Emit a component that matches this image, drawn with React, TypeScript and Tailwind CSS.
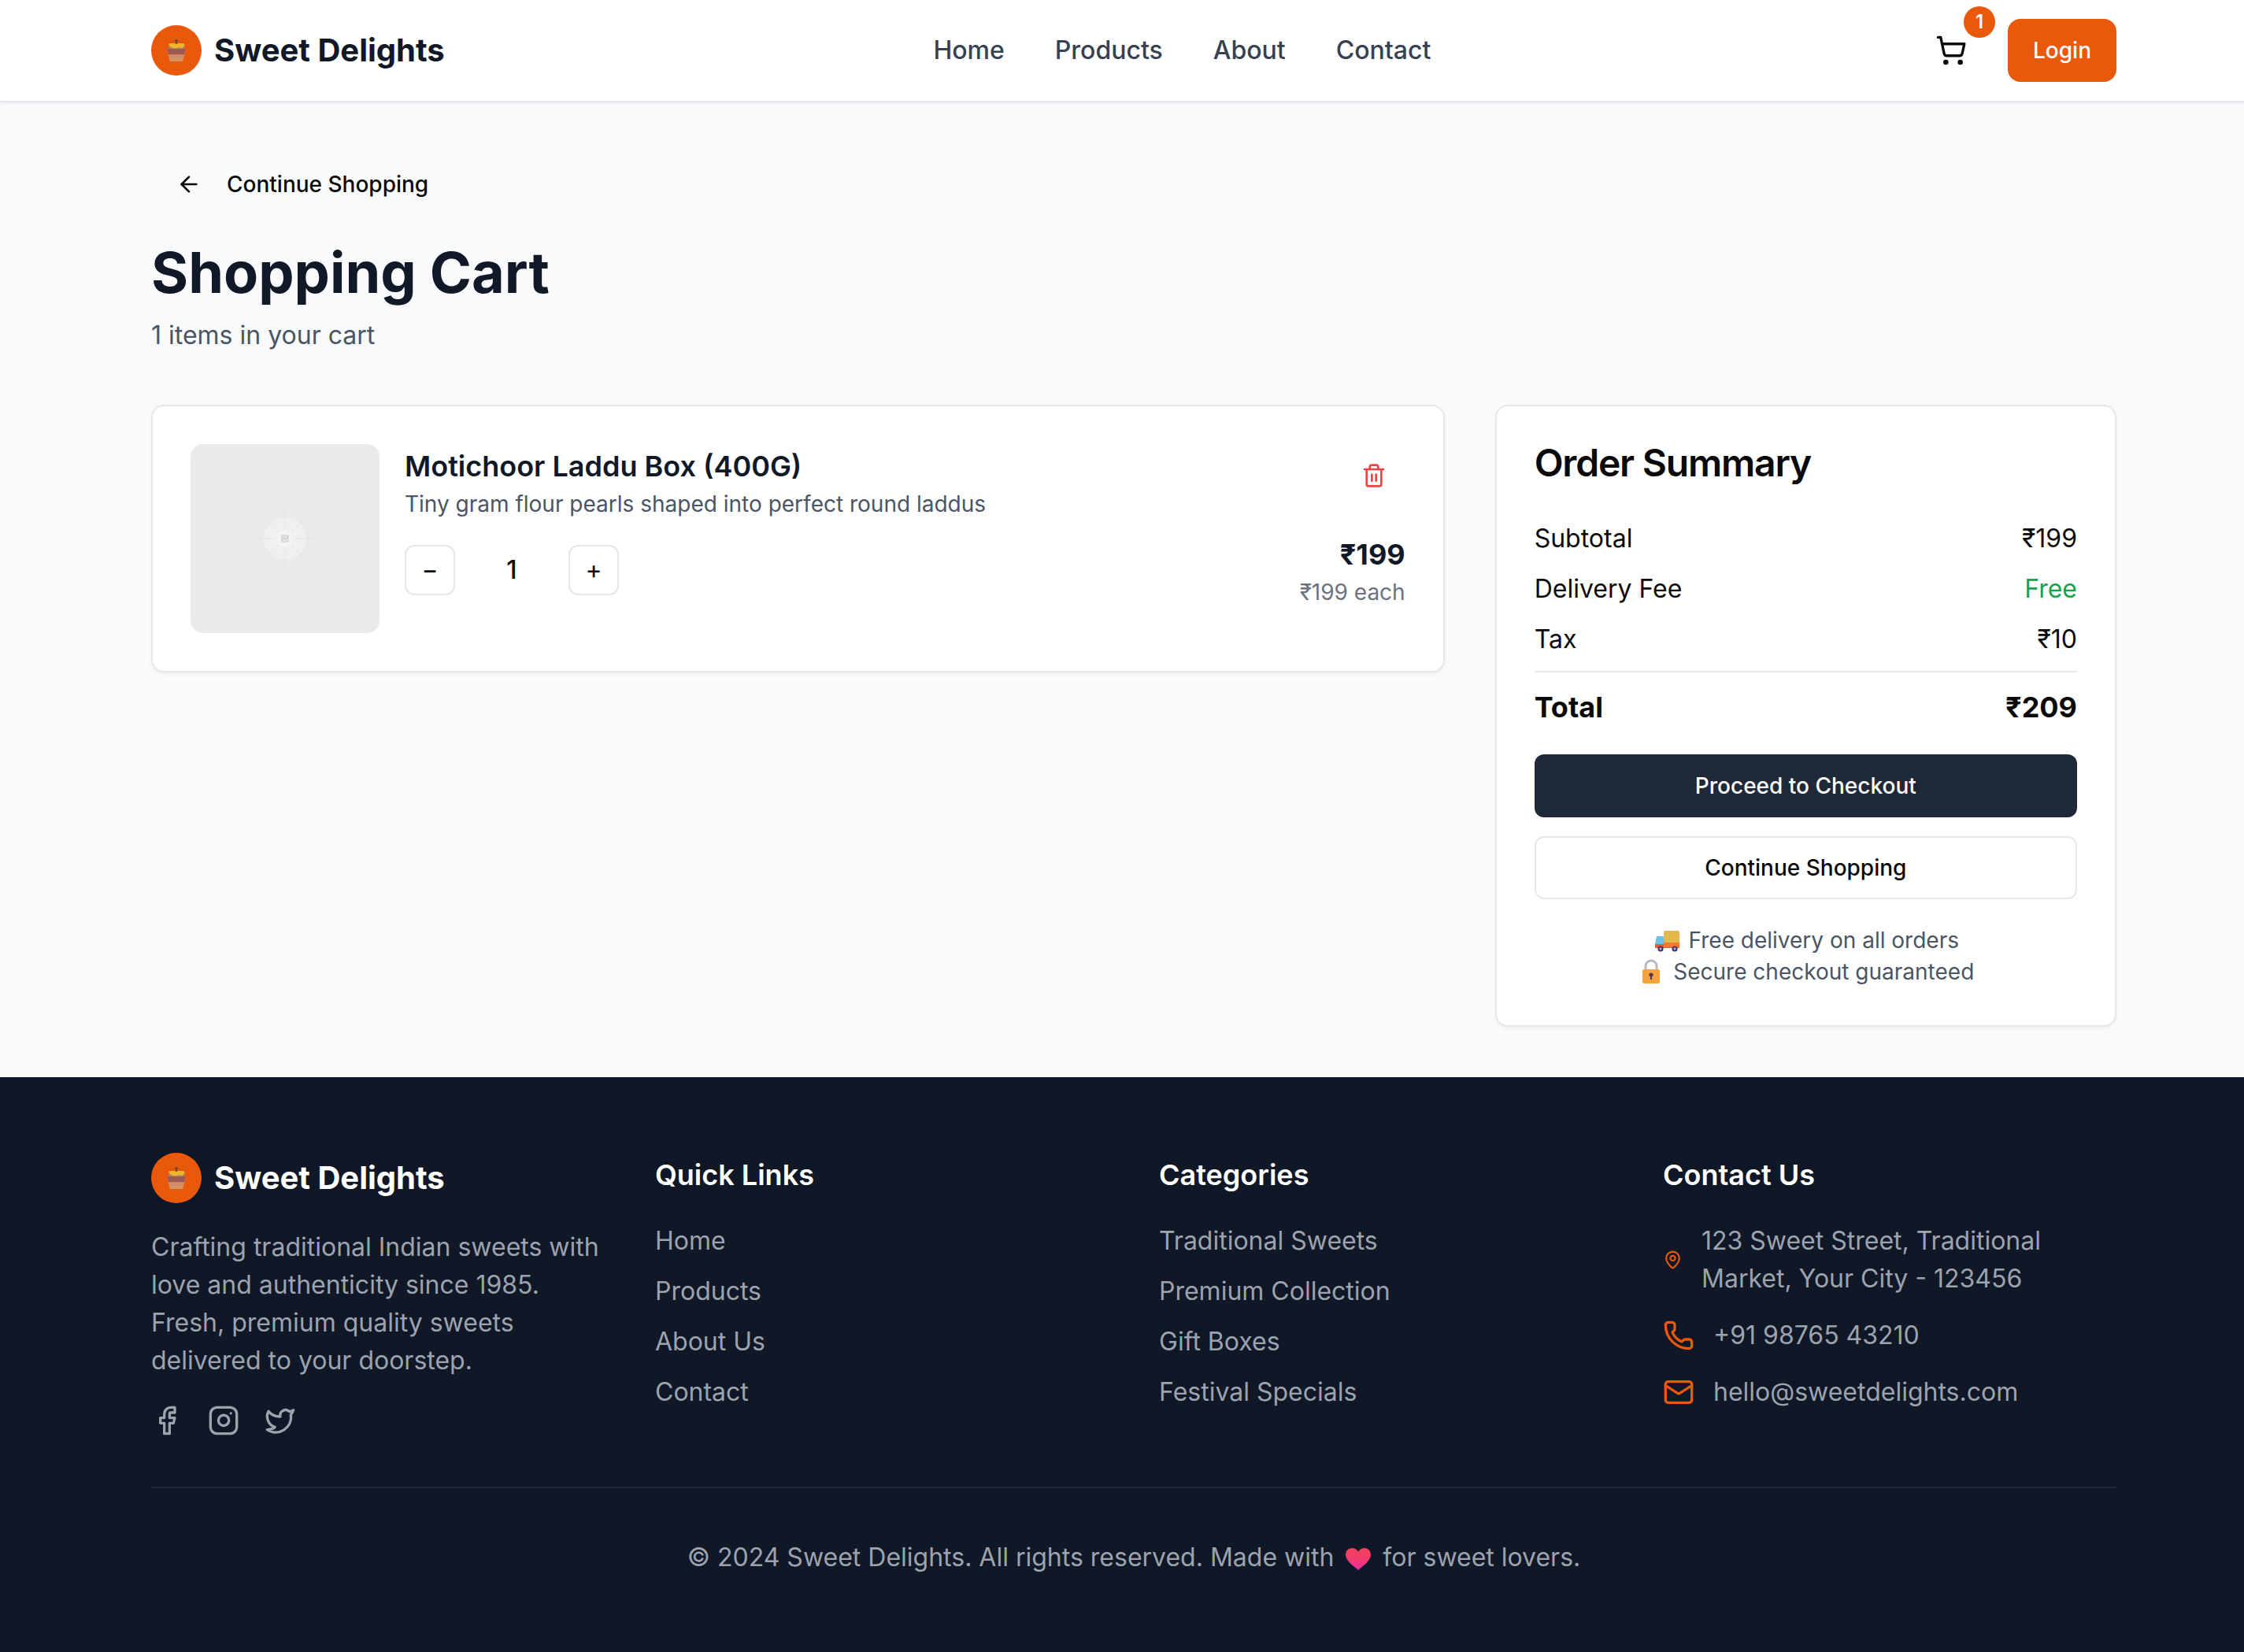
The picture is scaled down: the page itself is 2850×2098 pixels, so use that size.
import React from 'react';
import { ArrowLeft, Facebook, Instagram, Mail, MapPin, Phone, ShoppingCart, Trash2, Twitter } from 'lucide-react';

function HoneyPot() {
    return (
        <svg viewBox="0 0 26 30" className="w-[26px] h-[30px]">
            <defs>
                <linearGradient id="pot" x1="0" y1="0" x2="0" y2="1">
                    <stop offset="0" stopColor="#b5735a" />
                    <stop offset="1" stopColor="#dc9668" />
                </linearGradient>
            </defs>
            <path d="M4 9 L22 9 C25 12 25 16 23 22 L21 29 L5 29 L3 22 C1 16 1 12 4 9 Z" fill="url(#pot)" />
            <path d="M1.5 13 L24.5 13 C24.4 16 23.8 18 23 20 L3 20 C2.2 18 1.6 16 1.5 13 Z" fill="#9a5a52" />
            <path d="M4 6 L22 6 C24 7 24 10 21 11 C20 13 19 13 18 11 L13 12 C11 13 7 12 5 10 C3 9 3 7 4 6 Z" fill="#eab72d" />
            <rect x="12" y="1" width="2" height="6" fill="#7a4a2b" />
            <rect x="10.5" y="2" width="5" height="2" fill="#7a4a2b" />
        </svg>
    );
}

function Logo({ dark }: { dark?: boolean }) {
    return (
        <div className="flex items-center gap-4">
            <div className="w-16 h-16 rounded-full bg-[#ea580c] flex items-center justify-center">
                <HoneyPot />
            </div>
            <span className={`text-[40px] leading-[56px] font-bold ${dark ? 'text-white' : 'text-[#111827]'}`}>Sweet Delights</span>
        </div>
    );
}

function PlaceholderMark() {
    return (
        <svg viewBox="0 0 120 120" className="w-[120px] h-[120px]">
            <g stroke="#e3e3e3" strokeWidth="1">
                <line x1="60" y1="22" x2="60" y2="98" />
                <line x1="22" y1="60" x2="98" y2="60" />
                <line x1="23" y1="23" x2="97" y2="97" />
                <line x1="97" y1="23" x2="23" y2="97" />
            </g>
            <circle cx="60" cy="60" r="27" fill="#f0f0f0" />
            <g stroke="#e6e6e6" strokeWidth="1">
                <line x1="60" y1="33" x2="60" y2="87" />
                <line x1="33" y1="60" x2="87" y2="60" />
                <line x1="41" y1="41" x2="79" y2="79" />
                <line x1="79" y1="41" x2="41" y2="79" />
            </g>
            <circle cx="60" cy="60" r="11" fill="#f3f3f3" />
            <rect x="56" y="56" width="8" height="8" fill="#e6e6e6" stroke="#c8c8c8" strokeWidth="1" />
            <path d="M56 62 L59 59 L61 61 L64 57" stroke="#c0c0c0" strokeWidth="1" fill="none" />
        </svg>
    );
}

function TruckEmoji() {
    return (
        <svg viewBox="0 0 36 30" className="inline-block w-[36px] h-[30px] mr-[2px] align-[-6px]">
            <rect x="14" y="2" width="20" height="17" rx="2" fill="#e3b94d" />
            <path d="M5 9 L14 9 L14 19 L3 19 Z" fill="#67c6e8" />
            <path d="M3 19 L34 19 L34 24 L3 24 Z" fill="#f0582f" />
            <rect x="14" y="17" width="20" height="6" fill="#f47a34" />
            <circle cx="10" cy="25" r="3.6" fill="#4a3468" />
            <circle cx="10" cy="25" r="1.4" fill="#c9bcd9" />
            <circle cx="28" cy="25" r="3.6" fill="#4a3468" />
            <circle cx="28" cy="25" r="1.4" fill="#c9bcd9" />
        </svg>
    );
}

function LockEmoji() {
    return (
        <svg viewBox="0 0 36 32" className="inline-block w-[36px] h-[32px] mr-[2px] align-[-6px]">
            <path d="M11 14 V9 a7 7 0 0 1 14 0 V14" fill="none" stroke="#b8b8c4" strokeWidth="3" />
            <rect x="7" y="13" width="22" height="18" rx="2.5" fill="#f8a23c" />
            <circle cx="18" cy="20" r="2.6" fill="#4a3a5c" />
            <rect x="17" y="21" width="2" height="5" fill="#4a3a5c" />
        </svg>
    );
}

function HeartEmoji() {
    return (
        <svg viewBox="0 0 32 28" className="inline-block w-[32px] h-[28px] mx-[6px] align-[-5px]">
            <defs>
                <linearGradient id="heart" x1="0" y1="0" x2="0" y2="1">
                    <stop offset="0" stopColor="#f5405a" />
                    <stop offset="0.55" stopColor="#f23a6e" />
                    <stop offset="1" stopColor="#e82bb0" />
                </linearGradient>
            </defs>
            <path d="M16 28 C12 24 0 17 0 8.5 C0 3.5 3.6 0 8 0 C11.5 0 14.5 1.8 16 4.6 C17.5 1.8 20.5 0 24 0 C28.4 0 32 3.5 32 8.5 C32 17 20 24 16 28 Z" fill="url(#heart)" />
        </svg>
    );
}

export default function App() {
    return (
        <div className="overflow-hidden">
            <div className="w-[2880px] min-h-screen bg-[#f9fafb] font-[Inter,sans-serif] text-[#0a0a0a]">
                <nav className="bg-white border-b-2 border-[#e5e7eb] shadow-[0_2px_4px_rgba(0,0,0,0.05)]">
                    <div className="max-w-[2560px] mx-auto px-8 h-32 flex items-center justify-between">
                        <Logo />
                        <div className="flex items-center gap-16 text-[32px] leading-[48px] font-medium text-[#374151]">
                            <span>Home</span>
                            <span>Products</span>
                            <span>About</span>
                            <span>Contact</span>
                        </div>
                        <div className="flex items-center gap-8">
                            <button className="relative w-20 h-20 flex items-center justify-center">
                                <ShoppingCart className="w-10 h-10" strokeWidth={2} />
                                <span className="absolute -top-4 -right-4 w-10 h-10 rounded-full bg-[#ea580c] text-white text-2xl font-semibold flex items-center justify-center">1</span>
                            </button>
                            <button className="h-20 px-8 rounded-2xl bg-[#ea580c] text-white text-[28px] font-medium">Login</button>
                        </div>
                    </div>
                </nav>

                <main className="max-w-[2560px] mx-auto px-8 py-16">
                    <button className="h-20 px-8 flex items-center gap-8 text-[28px] font-medium">
                        <ArrowLeft className="w-8 h-8" strokeWidth={2} />
                        Continue Shopping
                    </button>
                    <h1 className="mt-8 text-[72px] leading-[80px] font-bold text-[#111827]">Shopping Cart</h1>
                    <p className="mt-4 mb-16 text-[32px] leading-[48px] text-[#4b5563]">1 items in your cart</p>

                    <div className="grid grid-cols-3 gap-16 items-start">
                        <div className="col-span-2 bg-white border-2 border-[#e5e7eb] rounded-2xl shadow-[0_2px_4px_rgba(0,0,0,0.05)] p-12 flex gap-8">
                            <div className="w-60 h-60 rounded-2xl bg-[#eaeaea] flex items-center justify-center shrink-0">
                                <PlaceholderMark />
                            </div>
                            <div className="flex-1">
                                <h3 className="text-[36px] leading-[56px] font-semibold text-[#111827]">Motichoor Laddu Box (400G)</h3>
                                <p className="text-[28px] leading-[40px] text-[#4b5563]">Tiny gram flour pearls shaped into perfect round laddus</p>
                                <div className="mt-8 flex items-center gap-4">
                                    <button className="w-16 h-16 rounded-xl border-2 border-[#e5e7eb] text-[32px] flex items-center justify-center">−</button>
                                    <span className="w-28 text-center text-[32px] font-medium">1</span>
                                    <button className="w-16 h-16 rounded-xl border-2 border-[#e5e7eb] text-[32px] flex items-center justify-center">+</button>
                                </div>
                            </div>
                            <div className="flex flex-col items-end">
                                <button className="w-20 h-20 mb-8 flex items-center justify-center text-[#ef4444]">
                                    <Trash2 className="w-8 h-8" strokeWidth={2} />
                                </button>
                                <p className="text-[36px] leading-[56px] font-bold text-[#111827]">₹199</p>
                                <p className="text-[28px] leading-[40px] text-[#6b7280]">₹199 each</p>
                            </div>
                        </div>

                        <div className="bg-white border-2 border-[#e5e7eb] rounded-2xl shadow-[0_2px_4px_rgba(0,0,0,0.05)] p-12">
                            <h2 className="text-[48px] leading-[48px] font-semibold tracking-[-1.2px] mb-12">Order Summary</h2>
                            <div className="flex flex-col gap-4 text-[32px] leading-[48px]">
                                <div className="flex justify-between"><span>Subtotal</span><span>₹199</span></div>
                                <div className="flex justify-between"><span>Delivery Fee</span><span className="text-[#16a34a]">Free</span></div>
                                <div className="flex justify-between"><span>Tax</span><span>₹10</span></div>
                                <div className="border-t-2 border-[#e5e7eb] pt-4 flex justify-between text-[36px] leading-[56px] font-bold">
                                    <span>Total</span><span>₹209</span>
                                </div>
                            </div>
                            <button className="mt-8 w-full h-20 rounded-xl bg-[#1f2937] text-white text-[28px] font-medium">Proceed to Checkout</button>
                            <button className="mt-6 w-full h-20 rounded-xl bg-white border-2 border-[#e5e7eb] text-[28px] font-medium">Continue Shopping</button>
                            <div className="mt-8 text-center text-[28px] leading-[40px] text-[#4b5563]">
                                <p><TruckEmoji /> Free delivery on all orders</p>
                                <p><LockEmoji /> Secure checkout guaranteed</p>
                            </div>
                        </div>
                    </div>
                </main>

                <footer className="bg-[#101726] py-24">
                    <div className="max-w-[2560px] mx-auto px-8">
                        <div className="grid grid-cols-4 gap-16">
                            <div>
                                <Logo dark />
                                <p className="mt-8 text-[32px] leading-[48px] text-[#9ca3af]">Crafting traditional Indian sweets with love and authenticity since 1985. Fresh, premium quality sweets delivered to your doorstep.</p>
                                <div className="mt-8 flex gap-8 text-[#9ca3af]">
                                    <Facebook className="w-10 h-10" />
                                    <Instagram className="w-10 h-10" />
                                    <Twitter className="w-10 h-10" />
                                </div>
                            </div>
                            <div>
                                <h3 className="text-[36px] leading-[56px] font-semibold text-white mb-8">Quick Links</h3>
                                <ul className="flex flex-col gap-4 text-[32px] leading-[48px] text-[#9ca3af]">
                                    <li>Home</li>
                                    <li>Products</li>
                                    <li>About Us</li>
                                    <li>Contact</li>
                                </ul>
                            </div>
                            <div>
                                <h3 className="text-[36px] leading-[56px] font-semibold text-white mb-8">Categories</h3>
                                <ul className="flex flex-col gap-4 text-[32px] leading-[48px] text-[#9ca3af]">
                                    <li>Traditional Sweets</li>
                                    <li>Premium Collection</li>
                                    <li>Gift Boxes</li>
                                    <li>Festival Specials</li>
                                </ul>
                            </div>
                            <div>
                                <h3 className="text-[36px] leading-[56px] font-semibold text-white mb-8">Contact Us</h3>
                                <div className="flex flex-col gap-6 text-[32px] leading-[48px] text-[#9ca3af]">
                                    <div className="flex items-center gap-6">
                                        <MapPin className="w-[25px] h-10 shrink-0 text-[#ea580c]" />
                                        <span>123 Sweet Street, Traditional Market, Your City - 123456</span>
                                    </div>
                                    <div className="flex items-center gap-6">
                                        <Phone className="w-10 h-10 shrink-0 text-[#ea580c]" />
                                        <span>+91 98765 43210</span>
                                    </div>
                                    <div className="flex items-center gap-6">
                                        <Mail className="w-10 h-10 shrink-0 text-[#ea580c]" />
                                        <span>hello@sweetdelights.com</span>
                                    </div>
                                </div>
                            </div>
                        </div>
                        <div className="mt-16 border-t-2 border-[#1f2937] pt-16 text-center text-[32px] leading-[48px] text-[#9ca3af]">
                            © 2024 Sweet Delights. All rights reserved. Made with <HeartEmoji /> for sweet lovers.
                        </div>
                    </div>
                </footer>
            </div>
        </div>
    );
}
